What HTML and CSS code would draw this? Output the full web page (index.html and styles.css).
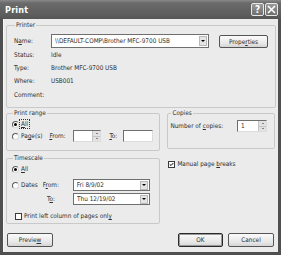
FILE: index.html
```html
<!DOCTYPE html>
<html>
<head>
<meta charset="utf-8">
<link rel="stylesheet" href="styles.css">
</head>
<body>
<div class="dialog">
  <div class="titlebar">
    <span class="title">Print</span>
    <div class="tbtns">
      <span class="tbtn">?</span>
      <span class="tbtn close">
        <svg width="9" height="9" viewBox="0 0 9 9"><path d="M1 1L8 8M8 1L1 8" stroke="#fff" stroke-width="1.6"/></svg>
      </span>
    </div>
  </div>
  <div class="body">
    <fieldset class="group printer">
      <legend>Printer</legend>
      <div class="namerow">
        <span class="lbl">N<u>a</u>me:</span>
        <div class="combo wide"><span class="ctext">\\DEFAULT-COMP\Brother MFC-9700 USB</span><span class="drop"><i></i></span></div>
        <span class="btn props">Prope<u>r</u>ties</span>
      </div>
      <div class="info"><span class="lbl">Status:</span><span>Idle</span></div>
      <div class="info"><span class="lbl">Type:</span><span>Brother MFC-9700 USB</span></div>
      <div class="info"><span class="lbl">Where:</span><span>USB001</span></div>
      <div class="info comment"><span class="lbl">Comment:</span><span></span></div>
    </fieldset>

    <div class="middle">
      <div class="leftcol">
        <fieldset class="group range">
          <legend>Print range</legend>
          <div class="row"><span class="radio on"></span><span class="focus"><u>A</u>ll</span></div>
          <div class="row">
            <span class="radio"></span><span class="rl">Pa<u>g</u>e(s)</span>
            <span class="from"><u>F</u>rom:</span>
            <div class="spin s1"><span class="sarrows"><i class="up"></i><i class="dn"></i></span></div>
            <span class="to"><u>T</u>o:</span>
            <div class="spin s2"></div>
          </div>
        </fieldset>
        <fieldset class="group timescale">
          <legend>Timescale</legend>
          <div class="row"><span class="radio on"></span><span class="rl"><u>A</u>ll</span></div>
          <div class="row">
            <span class="radio"></span><span class="rl">Dates</span>
            <span class="dfrom">F<u>r</u>om:</span>
            <div class="combo date"><span class="ctext">Fri 8/9/02</span><span class="drop"><i></i></span></div>
          </div>
          <div class="row">
            <span class="dto">T<u>o</u>:</span>
            <div class="combo date"><span class="ctext">Thu 12/19/02</span><span class="drop"><i></i></span></div>
          </div>
          <div class="row chk">
            <span class="checkbox"></span><span class="rl">Print left column of pages onl<u>y</u></span>
          </div>
        </fieldset>
      </div>
      <div class="rightcol">
        <fieldset class="group copies">
          <legend>Copies</legend>
          <div class="row">
            <span>Number of <u>c</u>opies:</span>
            <div class="spin s3"><span class="val">1</span><span class="sarrows"><i class="up"></i><i class="dn"></i></span></div>
          </div>
        </fieldset>
        <div class="manual">
          <span class="checkbox on"><svg width="7" height="7" viewBox="0 0 7 7"><path d="M1 3.2L2.8 5L6 1.5" stroke="#000" stroke-width="1.4" fill="none"/></svg></span>
          <span>Manual page <u>b</u>reaks</span>
        </div>
      </div>
    </div>

    <div class="buttons">
      <span class="btn preview">Previe<u>w</u></span>
      <span class="spacer"></span>
      <span class="btn ok">OK</span>
      <span class="btn cancel">Cancel</span>
    </div>
  </div>
</div>
</body>
</html>
```

FILE: styles.css
```css
html, body {
  margin: 0;
  padding: 0;
  background: #ffffff;
}

.dialog {
  width: 281px;
  height: 255px;
  box-sizing: border-box;
  display: flex;
  flex-direction: column;
  background: #4f4f4f;
  font-family: "DejaVu Sans Condensed", "DejaVu Sans", sans-serif;
  font-stretch: condensed;
  font-size: 6.4px;
  line-height: 8px;
  color: #2e2e2e;
}

u { text-decoration: underline; text-underline-offset: 1px; }

.titlebar {
  height: 19px;
  display: flex;
  align-items: center;
  padding: 0 3px 0 5px;
  background: linear-gradient(#8a8a8a 0px, #6a6a6a 3px, #5e5e5e 14px, #565656 19px);
  flex: none;
}

.title {
  color: #ffffff;
  font-weight: bold;
  font-size: 9px;
  font-family: "DejaVu Sans", Verdana, sans-serif;
  letter-spacing: 0.2px;
}

.tbtns {
  margin-left: auto;
  display: flex;
  gap: 1px;
}

.tbtn {
  width: 13px;
  height: 13px;
  box-sizing: border-box;
  border: 1px solid #e8e8e8;
  border-radius: 2px;
  background: linear-gradient(#9a9a9a, #6e6e6e);
  color: #ffffff;
  font-weight: bold;
  font-size: 10px;
  line-height: 11px;
  text-align: center;
  display: flex;
  align-items: center;
  justify-content: center;
}

.body {
  flex: 1;
  margin: 0 3px 3px 3px;
  background: #ebebeb;
  padding: 2px 3px 0 3px;
  display: flex;
  flex-direction: column;
  border-left: 1px solid #f6f6f6;
  box-sizing: border-box;
}

.group {
  margin: 0;
  border: 1px solid #c9c9c9;
  border-radius: 2px;
  box-sizing: border-box;
}

.group legend {
  padding: 0 1px;
  margin-left: 1px;
  line-height: 8px;
  color: #333;
}

/* Printer group */
.printer {
  width: 270px;
  height: 87px;
  padding: 5px 6px 0 7px;
  margin-left: -1px;
}

.namerow {
  display: flex;
  align-items: center;
  height: 14px;
}

.lbl {
  width: 37px;
  flex: none;
}

.combo {
  display: flex;
  align-items: center;
  height: 14px;
  box-sizing: border-box;
  border: 1px solid #6f6f6f;
  background: #ffffff;
  padding: 0 1px 0 3px;
}

.combo .ctext {
  flex: 1;
  white-space: nowrap;
  overflow: hidden;
}

.combo.wide { width: 158px; }

.drop {
  width: 8px;
  height: 10px;
  box-sizing: border-box;
  background: #e4e4e4;
  border: 1px solid #b9b9b9;
  display: flex;
  align-items: center;
  justify-content: center;
  flex: none;
}

.drop i {
  width: 0;
  height: 0;
  border-left: 2px solid transparent;
  border-right: 2px solid transparent;
  border-top: 2px solid #000;
}

.btn {
  display: flex;
  align-items: center;
  justify-content: center;
  height: 13px;
  box-sizing: border-box;
  border: 1px solid #555555;
  border-radius: 2px;
  background: linear-gradient(#fbfbfb, #e6e6e6 70%, #d4d4d4);
  color: #2e2e2e;
}

.props {
  width: 49px;
  margin-left: 10px;
  margin-top: 1px;
}

.info {
  display: flex;
  align-items: center;
  height: 13px;
}

.info.comment { margin-top: 1px; }

/* middle */
.middle {
  display: flex;
  margin-top: 1px;
  margin-left: -1px;
}

.leftcol {
  width: 155px;
  display: flex;
  flex-direction: column;
}

.rightcol {
  width: 108px;
  margin-left: 7px;
  display: flex;
  flex-direction: column;
}

.row {
  display: flex;
  align-items: center;
  height: 12px;
  white-space: nowrap;
}

.radio {
  width: 7px;
  height: 7px;
  box-sizing: border-box;
  border-radius: 50%;
  border: 1px solid #5a5a5a;
  border-right-color: #d8d8d8;
  border-bottom-color: #d8d8d8;
  background: #ffffff;
  flex: none;
  position: relative;
}

.radio.on::after {
  content: "";
  position: absolute;
  left: 1px;
  top: 1px;
  width: 3px;
  height: 3px;
  border-radius: 50%;
  background: #000;
}

.rl { margin-left: 2px; }

.focus {
  margin-left: 1px;
  padding: 0 1px;
  outline: 1px dotted #333;
  line-height: 8px;
}

.range {
  height: 42px;
  padding: 1px 4px 0 5px;
}

.from { margin-left: 7px; width: 24px; }

.spin {
  height: 12px;
  box-sizing: border-box;
  border: 1px solid #6f6f6f;
  border-right-color: #dcdcdc;
  border-bottom-color: #dcdcdc;
  background: #ffffff;
  display: flex;
  align-items: center;
}

.s1 { width: 28px; }
.s2 { width: 30px; margin-left: 0; }

.to { margin-left: 8px; width: 14px; }

.sarrows {
  margin-left: auto;
  width: 7px;
  height: 10px;
  display: flex;
  flex-direction: column;
  gap: 0;
  background: #e2e2e2;
  border-left: 1px solid #c4c4c4;
}

.sarrows i {
  flex: 1;
  display: flex;
  align-items: center;
  justify-content: center;
  border-bottom: 1px solid #c4c4c4;
}

.sarrows i::before {
  content: "";
  width: 0;
  height: 0;
  border-left: 1.5px solid transparent;
  border-right: 1.5px solid transparent;
}

.sarrows i.up::before { border-bottom: 1.5px solid #222; }
.sarrows i.dn::before { border-top: 1.5px solid #222; }
.sarrows i.dn { border-bottom: none; }

.timescale {
  height: 70px;
  margin-top: 3px;
  padding: 1px 4px 0 5px;
}

.timescale .row:nth-of-type(2) { margin-top: 4px; }
.timescale .row:nth-of-type(3) { margin-top: 2px; }
.timescale .row.chk { margin-top: 5px; padding-left: 3px; }

.dfrom { margin-left: 5px; width: 30px; }
.dto { margin-left: 35px; width: 26px; }

.combo.date {
  width: 77px;
  height: 12px;
}

.combo.date .drop { height: 9px; }

.checkbox {
  width: 7px;
  height: 7px;
  box-sizing: border-box;
  border: 1px solid #3a3a3a;
  background: #ffffff;
  flex: none;
  display: flex;
  align-items: center;
  justify-content: center;
}

.checkbox svg { display: block; }

.copies {
  height: 40px;
  padding: 3px 4px 0 2px;
}

.copies .row { justify-content: space-between; }

.s3 {
  width: 30px;
  margin-right: 3px;
}

.s3 .val { padding-left: 3px; }

.manual {
  display: flex;
  align-items: center;
  gap: 2px;
  margin-top: 11px;
  margin-left: 1px;
  white-space: nowrap;
}

.buttons {
  display: flex;
  margin-top: 9px;
  margin-left: 0;
}

.preview { width: 46px; height: 14px; }
.spacer { flex: 1; }
.ok { width: 45px; height: 14px; border-color: #2a2a2a; box-shadow: inset 0 0 0 1px #9a9a9a; }
.cancel { width: 46px; height: 14px; margin-left: 5px; margin-right: 1px; }
```
